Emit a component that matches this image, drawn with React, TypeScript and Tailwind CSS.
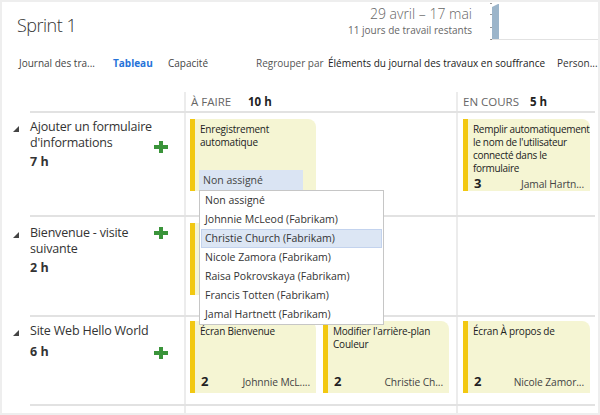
import React from "react";

// ── Small drawings ────────────────────────────────────────────────────────────

function Caret() {
  return (
    <svg width="6" height="6" viewBox="0 0 6 6" className="block">
      <polygon points="6,0 6,6 0,6" fill="#444" />
    </svg>
  );
}

function AddIcon() {
  return (
    <svg width="14" height="12" viewBox="0 0 14 12" className="block">
      <rect x="5" y="0" width="4" height="12" fill="#3a943a" />
      <rect x="0" y="4" width="14" height="4" fill="#3a943a" />
    </svg>
  );
}

function Burndown() {
  return (
    <svg width="108" height="38" viewBox="0 0 108 38" className="block">
      <line x1="1" y1="37.5" x2="108" y2="37.5" stroke="#e2e2e2" />
      <polygon points="2,5 4,4 6,3 8,2 9,2 9,37 2,37" fill="#9cb5ca" />
      <rect x="0.5" y="1" width="1" height="1" fill="#333" />
      <rect x="0.5" y="12" width="1" height="1" fill="#333" />
      <rect x="0.5" y="25" width="1" height="1" fill="#333" />
      <rect x="0.5" y="37" width="1" height="1" fill="#333" />
    </svg>
  );
}

// ── Cards ─────────────────────────────────────────────────────────────────────

type CardProps = {
  lines?: string[];
  est?: string;
  owner?: string;
  width?: string;
  tight?: boolean;
  children?: React.ReactNode;
};

function Card({ lines = [], est, owner, width = "w-[126px]", tight = false, children }: CardProps) {
  return (
    <div className={`${width} h-[72px] flex bg-[#f5f5d3] rounded-tr-[8px] overflow-hidden shrink-0`}>
      <div className="w-[5px] shrink-0 bg-[#f2c811]" />
      <div className={`flex-1 min-w-0 flex flex-col pl-[5px] pt-[4px] ${tight ? "pr-[1px]" : "pr-[6px]"}`}>
        <div className={`text-[10px] leading-[13px] text-[#222] ${tight ? "tracking-[-0.3px]" : "tracking-[-0.2px]"}`}>
          {lines.map((l) => (
            <div key={l} className="whitespace-nowrap">{l}</div>
          ))}
        </div>
        {children}
        {est && (
          <div className={`mt-auto pb-[3px] flex items-baseline justify-between ${tight ? "pr-[5px]" : ""}`}>
            <span className="text-[13px] leading-[16px] font-bold text-[#222] pl-[1px]">{est}</span>
            <span className="text-[10.25px] leading-[16px] tracking-[-0.1px] text-[#444] whitespace-nowrap">{owner}</span>
          </div>
        )}
      </div>
    </div>
  );
}

const PEOPLE = [
  "Non assigné",
  "Johnnie McLeod (Fabrikam)",
  "Christie Church (Fabrikam)",
  "Nicole Zamora (Fabrikam)",
  "Raisa Pokrovskaya (Fabrikam)",
  "Francis Totten (Fabrikam)",
  "Jamal Hartnett (Fabrikam)",
];

function AssignDropdown() {
  return (
    <div className="absolute z-10 left-[9px] top-[71px] w-[185px] bg-white border border-[#c6c6c6]">
      {PEOPLE.map((p, i) => (
        <div
          key={p}
          className={`h-[19px] leading-[17px] pl-[3px] text-[10.5px] text-[#333] whitespace-nowrap border mx-[1px] ${
            i === 2 ? "bg-[#dce6f4] border-[#c3d3ee]" : "border-transparent"
          }`}
        >
          {p}
        </div>
      ))}
    </div>
  );
}

// ── Board rows ────────────────────────────────────────────────────────────────

type StoryProps = {
  pt: string;
  lines: string[];
  hours: string;
  hoursMt: string;
  plusMt: string;
};

function StoryCell({ pt, lines, hours, hoursMt, plusMt }: StoryProps) {
  return (
    <div className={`flex ${pt} h-full`}>
      <div className="flex flex-col">
        <div className="text-[12.5px] leading-[16px] tracking-[-0.2px] text-[#333] w-[124px]">
          {lines.map((l) => (
            <div key={l} className="whitespace-nowrap">{l}</div>
          ))}
        </div>
        <div className={`${hoursMt} text-[12.5px] leading-[16px] font-bold text-[#333]`}>{hours}</div>
      </div>
      <div className={`ml-auto mr-[16px] ${plusMt}`}>
        <AddIcon />
      </div>
    </div>
  );
}

function Row({
  height,
  pt,
  caretMt,
  story,
  col1,
  col2,
}: {
  height: string;
  pt: string;
  caretMt: string;
  story: StoryProps;
  col1?: React.ReactNode;
  col2?: React.ReactNode;
}) {
  return (
    <div className={`flex ${height}`}>
      <div className={`w-[28px] shrink-0 pl-[11px] ${caretMt}`}>
        <Caret />
      </div>
      <div className="flex-1 flex mr-[3px] border-b-2 border-[#e2e2e2]">
        <div className="w-[154px] shrink-0">
          <StoryCell {...story} />
        </div>
        <div className={`w-[272px] shrink-0 border-l-2 border-[#ececec] pl-[4px] ${pt}`}>{col1}</div>
        <div className={`flex-1 border-l-2 border-[#ececec] pl-[5px] ${pt}`}>{col2}</div>
      </div>
    </div>
  );
}

// ── Page ──────────────────────────────────────────────────────────────────────

export default function App() {
  return (
    <div className="w-[600px] h-[415px] border-2 border-[#eeeeee] bg-white overflow-hidden flex flex-col font-['Open_Sans',sans-serif] text-[#333]">
      {/* Header */}
      <div className="flex h-[40px] shrink-0">
        <div className="pl-[15px] pt-[11px] text-[18px] leading-[24px] tracking-[-0.5px] font-light text-[#333]">Sprint 1</div>
        <div className="ml-auto mr-[18px] pt-[3px] text-right text-[#666]">
          <div className="text-[14px] leading-[18px] font-light">29 avril – 17 mai</div>
          <div className="text-[10px] leading-[14px]">11 jours de travail restants</div>
        </div>
        <div className="w-[108px]">
          <Burndown />
        </div>
      </div>

      {/* Tabs / toolbar */}
      <div className="flex mt-[15px] h-[13px] pl-[17px] text-[10px] leading-[13px] whitespace-nowrap">
        <span className="w-[94px] text-[#444]">Journal des tra...</span>
        <span className="w-[55px] font-bold text-[#2673d9]">Tableau</span>
        <span className="w-[88px] text-[#444]">Capacité</span>
        <span className="w-[72px] text-[#555]">Regrouper par</span>
        <span className="w-[229px] text-[#222]">Éléments du journal des travaux en souffrance</span>
        <span className="text-[#333]">Person...</span>
      </div>

      {/* Board */}
      <div className="mt-[22px] flex-1 flex flex-col">
        {/* column headers */}
        <div className="flex h-[21px] shrink-0">
          <div className="w-[28px] shrink-0" />
          <div className="flex-1 flex mr-[3px] border-b-2 border-[#e2e2e2]">
            <div className="w-[154px] shrink-0" />
            <div className="w-[272px] shrink-0 border-l-2 border-[#ececec] pl-[5px] pt-[2px] text-[11.5px] leading-[16px] whitespace-nowrap flex">
              <span className="w-[57px] text-[#666]">À FAIRE</span>
              <span className="font-bold text-[#222]">10 h</span>
            </div>
            <div className="flex-1 border-l-2 border-[#ececec] pl-[5px] pt-[2px] text-[11.5px] leading-[16px] whitespace-nowrap flex">
              <span className="w-[67px] text-[#666]">EN COURS</span>
              <span className="font-bold text-[#222]">5 h</span>
            </div>
          </div>
        </div>

        <Row
          height="h-[104px]"
          pt="pt-[6px]"
          caretMt="mt-[13px]"
          story={{
            pt: "pt-[6px]",
            lines: ["Ajouter un formulaire", "d'informations"],
            hours: "7 h",
            hoursMt: "mt-[3px]",
            plusMt: "mt-[22px]",
          }}
          col1={
            <div className="relative w-[126px]">
              <Card lines={["Enregistrement", "automatique"]}>
                <div className="mt-auto -ml-[1px] w-[104px] h-[21px] bg-[#dae4f3] pl-[4px] text-[10.5px] leading-[20px] text-[#444]">
                  Non assigné
                </div>
              </Card>
              <AssignDropdown />
            </div>
          }
          col2={
            <Card
              width="w-[127px]"
              tight
              lines={["Remplir automatiquement", "le nom de l'utilisateur", "connecté dans le", "formulaire"]}
              est="3"
              owner="Jamal Hartn..."
            />
          }
        />

        <Row
          height="h-[100px]"
          pt="pt-[6px]"
          caretMt="mt-[15px]"
          story={{
            pt: "pt-[8px]",
            lines: ["Bienvenue - visite", "suivante"],
            hours: "2 h",
            hoursMt: "mt-[3px]",
            plusMt: "mt-[2px]",
          }}
          col1={<Card />}
        />

        <Row
          height="h-[89px]"
          pt="pt-[4px]"
          caretMt="mt-[13px]"
          story={{
            pt: "pt-[6px]",
            lines: ["Site Web Hello World"],
            hours: "6 h",
            hoursMt: "mt-[5px]",
            plusMt: "mt-[24px]",
          }}
          col1={
            <div className="flex gap-[7px]">
              <Card lines={["Écran Bienvenue"]} est="2" owner="Johnnie McL...." />
              <Card lines={["Modifier l'arrière-plan", "Couleur"]} est="2" owner="Christie Ch..." />
            </div>
          }
          col2={<Card width="w-[127px]" lines={["Écran À propos de"]} est="2" owner="Nicole Zamor..." />}
        />

        {/* remaining space under the last row */}
        <div className="flex flex-1">
          <div className="w-[28px] shrink-0" />
          <div className="flex-1 flex mr-[3px]">
            <div className="w-[154px] shrink-0" />
            <div className="w-[272px] shrink-0 border-l-2 border-[#ececec]" />
            <div className="flex-1 border-l-2 border-[#ececec]" />
          </div>
        </div>
      </div>
    </div>
  );
}
